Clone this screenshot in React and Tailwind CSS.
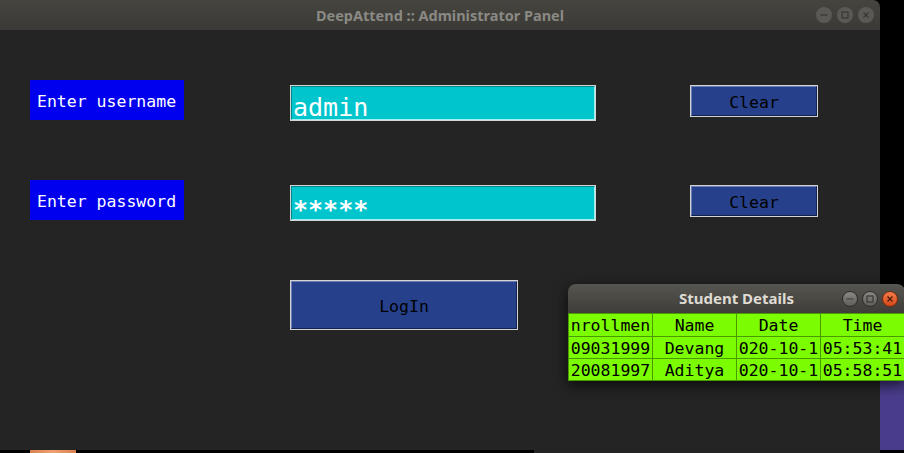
import React from "react";

function MainCtl({ kind }) {
  return (
    <div className="w-[16px] h-[16px] rounded-full bg-[#5a5955] flex items-center justify-center">
      <svg width="10" height="10" viewBox="0 0 10 10" fill="none" stroke="#3a3935" strokeWidth="1.3">
        {kind === "min" && <line x1="1.5" y1="5" x2="8.5" y2="5" />}
        {kind === "max" && <rect x="2" y="2" width="6" height="6" />}
        {kind === "close" && (
          <>
            <line x1="2.5" y1="2.5" x2="7.5" y2="7.5" />
            <line x1="7.5" y1="2.5" x2="2.5" y2="7.5" />
          </>
        )}
      </svg>
    </div>
  );
}

function SubCtl({ kind }) {
  const close = kind === "close";
  return (
    <div
      className={
        close
          ? "w-[16px] h-[16px] rounded-full bg-gradient-to-b from-[#f37a48] to-[#d4481a] border border-[#7a2a0c] flex items-center justify-center"
          : "w-[16px] h-[16px] rounded-full bg-gradient-to-b from-[#8a8985] to-[#5e5d59] border border-[#2e2d2a] flex items-center justify-center"
      }
    >
      <svg width="10" height="10" viewBox="0 0 10 10" fill="none" stroke={close ? "#4a1a06" : "#3a3935"} strokeWidth="1.2">
        {kind === "min" && <line x1="1.5" y1="5" x2="8.5" y2="5" />}
        {kind === "max" && <rect x="2" y="2" width="6" height="6" />}
        {close && (
          <>
            <line x1="2.5" y1="2.5" x2="7.5" y2="7.5" />
            <line x1="7.5" y1="2.5" x2="2.5" y2="7.5" />
          </>
        )}
      </svg>
    </div>
  );
}

function Label({ children }) {
  return (
    <div className="ml-[30px] w-[154px] h-[40px] bg-[#0000ee] text-white text-[16.5px] flex items-center pl-[7px] pt-[4px] whitespace-nowrap">
      {children}
    </div>
  );
}

function Entry({ children, extra }) {
  return (
    <div className="ml-[106px] mt-[5px] w-[306px] h-[36px] border border-[#d4d4d4]">
      <div className={"h-full border-t border-l border-t-[#00878d] border-l-[#00878d] border-b border-r border-b-[#9ff0f3] border-r-[#9ff0f3] bg-[#00c5cd] text-white text-[25px] leading-[18px] pl-[1px] whitespace-nowrap " + extra}>
        {children}
      </div>
    </div>
  );
}

function Btn({ children, cls }) {
  return (
    <div className={"border border-[#d4d4d4] " + cls}>
      <div className="h-full border-t border-l border-t-[#6a7db5] border-l-[#6a7db5] border-b border-r border-b-[#13214e] border-r-[#13214e] bg-[#27408b] text-black text-[16.5px] flex items-center justify-center pt-[4px]">
        {children}
      </div>
    </div>
  );
}

const rows = [
  ["nrollmen", "Name", "Date", "Time"],
  ["09031999", "Devang", "020-10-1", "05:53:41"],
  ["20081997", "Aditya", "020-10-1", "05:58:51"],
];

export default function App() {
  return (
    <div className="w-[904px] h-[453px] bg-black relative overflow-hidden font-['DejaVu_Sans_Mono',monospace]">
      {/* desktop purple item */}
      <div className="absolute left-[880px] top-[380px] w-[24px] h-[70px] bg-[#4a3c8c]" />

      {/* main window */}
      <div className="w-[880px] flex flex-col">
        <div className="h-[30px] bg-gradient-to-b from-[#45443f] to-[#3b3a36] rounded-tr-[7px] grid grid-cols-[1fr_auto_1fr] items-center">
          <div />
          <div className="font-['Noto_Sans',sans-serif] font-bold text-[14.5px] text-[#8a8984] pt-[1px]">
            DeepAttend :: Administrator Panel
          </div>
          <div className="flex justify-end gap-[5px] pr-[6px]">
            <MainCtl kind="min" />
            <MainCtl kind="max" />
            <MainCtl kind="close" />
          </div>
        </div>
        <div className="h-[420px] bg-[#242424] pt-[50px] flex flex-col">
          <div className="h-[100px] flex items-start">
            <Label>Enter username</Label>
            <Entry extra="pt-[12px]">admin</Entry>
            <Btn cls="ml-[94px] mt-[5px] w-[128px] h-[32px]">Clear</Btn>
          </div>
          <div className="h-[100px] flex items-start">
            <Label>Enter password</Label>
            <Entry extra="pt-[14px] font-bold">*****</Entry>
            <Btn cls="ml-[94px] mt-[5px] w-[128px] h-[32px]">Clear</Btn>
          </div>
          <div className="h-[100px] flex items-start">
            <Btn cls="ml-[290px] w-[228px] h-[50px]">LogIn</Btn>
          </div>
        </div>
        <div className="h-[3px] flex">
          <div className="w-[30px] bg-black" />
          <div className="w-[46px] bg-gradient-to-r from-[#d9814f] via-[#f0a070] to-[#d9814f]" />
          <div className="w-[458px] bg-black" />
          <div className="flex-1 bg-[#232323]" />
        </div>
      </div>

      {/* Student Details window */}
      <div className="absolute left-[568px] top-[284px] w-[337px] rounded-t-[8px] overflow-hidden shadow-[0_4px_14px_rgba(0,0,0,0.7)]">
        <div className="h-[29px] bg-gradient-to-b from-[#56554f] to-[#3e3d39] grid grid-cols-[1fr_auto_1fr] items-center">
          <div />
          <div className="font-['Noto_Sans',sans-serif] font-bold text-[15px] text-[#dfdbd2]">Student Details</div>
          <div className="flex justify-end gap-[4px] pr-[7px]">
            <SubCtl kind="min" />
            <SubCtl kind="max" />
            <SubCtl kind="close" />
          </div>
        </div>
        <div className="grid grid-cols-[83px_83px_83px_83px] grid-rows-[22px_21px_21px] gap-px p-px bg-[#4a9a00]">
          {rows.flatMap((r, i) =>
            r.map((c, j) => (
              <div
                key={i + "-" + j}
                className="bg-[#7cfc00] text-black text-[16.5px] leading-none flex justify-center items-start pt-[4px] overflow-hidden whitespace-nowrap"
              >
                {c}
              </div>
            ))
          )}
        </div>
      </div>
    </div>
  );
}
